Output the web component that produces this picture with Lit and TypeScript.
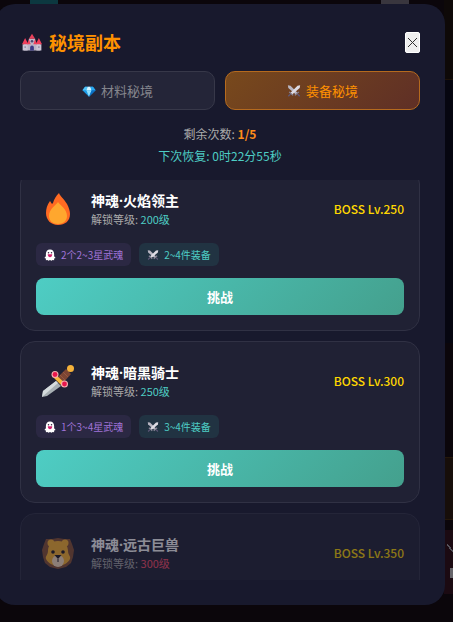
import { LitElement, html, css, svg } from "lit";
import { customElement, state, query } from "lit/decorators.js";
import { classMap } from "lit/directives/class-map.js";

const castle = svg`
  <path d="M3 16h26v12H3z" fill="#b9b5c6"/>
  <path d="M11 9h10v9H11z" fill="#bdb8c9"/>
  <path d="M1 18h8v10H1zM23 18h8v10h-8z" fill="#cbc6d5"/>
  <path d="M16 1l5 8H11z" fill="#e8405a"/>
  <path d="M5 8l5 10H0zM27 8l5 10H22z" fill="#f0405c"/>
  <path d="M11 10l3 8H8zM21 10l3 8h-6z" fill="#f0405c"/>
  <circle cx="16" cy="13" r="2" fill="#4c4a72"/>
  <path d="M13 28v-5a3 3 0 0 1 6 0v5z" fill="#3c3a86"/>
  <path d="M4 21h2v3H4zM26 21h2v3h-2z" fill="#8d88a0"/>`;

const gem = svg`
  <path d="M7 6h18l6 8-15 15L1 14z" fill="#1c9ce8"/>
  <path d="M7 6h6l-3 8H1z" fill="#4fc3f7"/>
  <path d="M13 6h6l3 8H10z" fill="#d8f5ff"/>
  <path d="M19 6h6l6 8h-9z" fill="#2aa8f0"/>
  <path d="M10 14h12l-6 15z" fill="#8fe0ff"/>
  <path d="M22 14h9L16 29z" fill="#0b6fc4"/>`;

const swords = svg`
  <path d="M2 3l6 1 16 16-4 4L3 9z" fill="#b9b6c2"/>
  <path d="M30 3l-6 1L8 20l4 4L29 9z" fill="#dddbe3"/>
  <path d="M5 18l9 8M27 18l-9 8" stroke="#8a8798" stroke-width="3"/>
  <path d="M8 23l-5 5M24 23l5 5" stroke="#5f5878" stroke-width="3"/>`;

const ghost = svg`
  <path d="M16 1C9 1 5 6 5 13v6l-4 5 4 1v5l4-1 3 2 4-2 4 2 3-2 4 1v-5l4-1-4-5v-6C27 6 23 1 16 1z" fill="#fff"/>
  <circle cx="12" cy="10" r="2" fill="#33203c"/>
  <circle cx="20" cy="10" r="2" fill="#33203c"/>
  <path d="M10 14h12c0 5-3 8-6 8s-6-3-6-8z" fill="#d0246e"/>`;

const flame = svg`
  <path d="M17 0c1 3 5 6 8 11 2 4 3 7 3 10 0 7-5 11-12 11S4 27 4 20c0-4 1-8 4-12l2 3 1-1c1-4 3-7 6-10z" fill="#ff6a22"/>
  <path d="M16 9c2 3 9 7 9 14 0 5-4 8-9 8s-9-3-9-8c0-7 7-11 9-14z" fill="#ffa72e"/>`;

const dagger = svg`
  <path d="M14 16l5 5L5 31l-5 1 1-6z" fill="#a8b0b4"/>
  <path d="M14 16l2 2L0 32l1-6z" fill="#d6dcde"/>
  <path d="M24 4l5 5-8 9-6-5z" fill="#7d4533"/>
  <path d="M21 7l5 5M18 10l5 5" stroke="#95573f" stroke-width="1"/>
  <path d="M14 10l10 9-3 3-10-10z" fill="#f8b83a"/>
  <circle cx="28.500" cy="3.500" r="3.500" fill="#f5b23a"/>
  <circle cx="13" cy="9.500" r="3.500" fill="#f6b0b0"/>
  <circle cx="13" cy="9.500" r="2.400" fill="#e8174c"/>
  <circle cx="22.500" cy="19" r="3.500" fill="#f6b0b0"/>
  <circle cx="22.500" cy="19" r="2.400" fill="#e8174c"/>`;

const lion = svg`
  <path d="M4 2l6 0 6-1 6 1 6 0 2 5 2 6-1 7-2 6-5 4-8 2-8-2-5-4-2-6-1-7 2-6z" fill="#8a5232"/>
  <circle cx="9" cy="6" r="3.500" fill="#ffb52e"/>
  <circle cx="23" cy="6" r="3.500" fill="#ffb52e"/>
  <path d="M16 4c7 0 10 5 10 10 0 4 3 5 2 8-2 4-7 7-12 7S6 26 4 22c-1-3 2-4 2-8C6 9 9 4 16 4z" fill="#ffb52e"/>
  <ellipse cx="16" cy="24" rx="6" ry="6" fill="#ffe3c0"/>
  <circle cx="11" cy="15" r="1.800" fill="#201a22"/>
  <circle cx="21" cy="15" r="1.800" fill="#201a22"/>
  <path d="M12.500 18h7L16 22z" fill="#201a22"/>
  <path d="M16 22v3" stroke="#201a22" stroke-width="1"/>`;

const icon = (shape: unknown, size: string) =>
  html`<svg class="icon ${size}" viewBox="0 0 32 32" aria-hidden="true">${shape}</svg>`;

interface Boss {
  name: string;
  art: unknown;
  unlock: number;
  level: number;
  souls: string;
  gear: string;
  locked: boolean;
}

const bosses: Boss[] = [
  { name: "神魂·火焰领主", art: flame, unlock: 200, level: 250, souls: "2个2~3星武魂", gear: "2~4件装备", locked: false },
  { name: "神魂·暗黑骑士", art: dagger, unlock: 250, level: 300, souls: "1个3~4星武魂", gear: "3~4件装备", locked: false },
  { name: "神魂·远古巨兽", art: lion, unlock: 300, level: 350, souls: "2个3~4星武魂", gear: "4~5件装备", locked: true },
];

@customElement("app-root")
export class AppRoot extends LitElement {
  @state() private tab = "gear";
  @query(".list") private list!: HTMLElement;

  static styles = css`
    :host, * { box-sizing: border-box; }
    :host {
      display: flex;
      position: relative;
      height: 100vh;
      overflow: hidden;
      padding: 4px 8px 17px 0;
      background: #0b060b;
      font-family: "Noto Sans CJK SC", sans-serif;
      font-size: 12px;
      line-height: 18px;
      color: #aaa;
    }
    h2, h3, p { margin: 0; }
    button { font-family: inherit; cursor: pointer; }
    .icon { display: block; flex: none; }
    .tiny { width: 12px; height: 12px; }
    .small { width: 14px; height: 14px; }
    .medium { width: 20px; height: 20px; }
    .large { width: 32px; height: 32px; }

    .backdrop { position: absolute; inset: 0; }
    .backdrop span { position: absolute; }
    .edge-a { top: 0; right: 0; width: 9px; height: 80px; background: #0e0908; border-bottom: 1px solid #1d1209; }
    .edge-b { top: 80px; right: 0; width: 9px; height: 263px; background: #060610; }
    .edge-c { top: 457px; right: 0; width: 9px; height: 63px; background: #170e0a; border: 1px solid #24170a; border-width: 1px 0; }
    .edge-d { top: 530px; right: 0; width: 9px; height: 64px; background: #1b0a12; }
    .edge-e { top: 568px; right: 0; width: 3px; height: 10px; background: #66646a; }
    .edge-f { top: 544px; right: 0; width: 6px; height: 8px; background: linear-gradient(to top right, transparent 42%, #55535c 42%, #55535c 58%, transparent 58%); }
    .edge-g { top: 0; left: 30px; width: 28px; height: 4px; background: #0c3840; }
    .edge-h { top: 0; right: 44px; width: 28px; height: 4px; background: #39363e; }

    .dialog {
      position: relative;
      flex: 1;
      min-width: 0;
      display: flex;
      flex-direction: column;
      margin-left: -5px;
      padding: 25px;
      border-radius: 20px;
      background: #18192d;
    }
    .top {
      display: flex;
      align-items: center;
      justify-content: space-between;
      height: 27px;
      margin-bottom: 15px;
    }
    .title {
      display: flex;
      align-items: center;
      gap: 7px;
      padding-left: 2px;
      font-size: 18px;
      line-height: 27px;
      color: #ff9100;
    }
    .close {
      display: grid;
      place-items: center;
      width: 15px;
      height: 21px;
      padding: 0;
      border: 1px solid #fff;
      border-radius: 2px;
      background: #efefef;
    }
    .cross { width: 11px; height: 11px; stroke: #333; stroke-width: 1; fill: none; }

    .tabs { display: flex; gap: 10px; }
    .tab {
      flex: 1;
      display: flex;
      align-items: center;
      justify-content: center;
      gap: 5px;
      height: 39px;
      padding: 0;
      border: 1px solid #373849;
      border-radius: 10px;
      background: #242538;
      font-size: 13px;
      color: #85858d;
    }
    .tab.active {
      border-color: #b56a1e;
      background: linear-gradient(135deg, #78491c, #5f2f26);
      color: #ff9100;
    }
    .status {
      padding: 13px 0;
      text-align: center;
      line-height: 22px;
    }
    .count { color: #ff8c1a; }
    .timer { color: #4ecdc4; }

    .list {
      flex: 1;
      min-height: 0;
      overflow-y: auto;
      scrollbar-width: none;
      display: flex;
      flex-direction: column;
      gap: 10px;
    }
    .card {
      flex: none;
      padding: 15px;
      border: 1px solid #303144;
      border-radius: 15px;
      background: #202134;
    }
    .card.locked { opacity: 0.5; }
    .head {
      display: flex;
      align-items: center;
      gap: 12px;
      height: 48px;
      margin-bottom: 10px;
    }
    .art { display: grid; place-items: center; width: 43px; }
    .info { flex: 1; }
    .name {
      font-family: "Open Sans", "Noto Sans CJK SC", sans-serif;
      font-size: 14px;
      line-height: 20px;
      color: #fff;
    }
    .need { font-size: 11px; line-height: 16px; }
    .met { color: #4ecdc4; }
    .unmet { color: #ff4d6a; }
    .level { font-weight: 500; color: #ffd700; }
    .loot { display: flex; gap: 8px; margin-bottom: 12px; }
    .tag {
      display: flex;
      align-items: center;
      gap: 5px;
      height: 23px;
      padding: 0 8px;
      border-radius: 6px;
      font-size: 10px;
    }
    .soul { background: #2b2843; color: #a074d8; }
    .gear { background: #213342; color: #4ecdc4; }
    .fight {
      display: block;
      width: 100%;
      height: 37px;
      padding: 0;
      border: 0;
      border-radius: 8px;
      background: linear-gradient(135deg, #4ecdc4, #44a08d);
      font-size: 13px;
      font-weight: 700;
      color: #fff;
    }
  `;

  firstUpdated() {
    this.list.scrollTop = 11;
  }

  private tabButton(id: string, label: string, shape: unknown) {
    return html`<button
      class=${classMap({ tab: true, active: this.tab === id })}
      role="tab"
      aria-selected=${this.tab === id}
      @click=${() => (this.tab = id)}
    >${icon(shape, "small")}${label}</button>`;
  }

  private card(b: Boss) {
    return html`<article class=${classMap({ card: true, locked: b.locked })}>
      <div class="head">
        <div class="art">${icon(b.art, "large")}</div>
        <div class="info">
          <h3 class="name">${b.name}</h3>
          <p class="need">解锁等级: <span class=${b.locked ? "unmet" : "met"}>${b.unlock}级</span></p>
        </div>
        <div class="level">BOSS Lv.${b.level}</div>
      </div>
      <div class="loot">
        <div class="tag soul">${icon(ghost, "tiny")}${b.souls}</div>
        <div class="tag gear">${icon(swords, "tiny")}${b.gear}</div>
      </div>
      <button class="fight" ?disabled=${b.locked}>挑战</button>
    </article>`;
  }

  render() {
    return html`
      <div class="backdrop" aria-hidden="true">
        ${["a", "b", "c", "d", "e", "f", "g", "h"].map((k) => html`<span class="edge-${k}"></span>`)}
      </div>
      <section class="dialog" role="dialog" aria-label="秘境副本">
        <header class="top">
          <h2 class="title">${icon(castle, "medium")}秘境副本</h2>
          <button class="close" aria-label="关闭">
            <svg class="cross" viewBox="0 0 11 11" aria-hidden="true"><path d="M1 1l9 9M10 1l-9 9"/></svg>
          </button>
        </header>
        <div class="tabs" role="tablist">
          ${this.tabButton("material", "材料秘境", gem)}
          ${this.tabButton("gear", "装备秘境", swords)}
        </div>
        <div class="status">
          <p>剩余次数: <strong class="count">1/5</strong></p>
          <p class="timer">下次恢复: 0时22分55秒</p>
        </div>
        <div class="list">${bosses.map((b) => this.card(b))}</div>
      </section>
    `;
  }
}
